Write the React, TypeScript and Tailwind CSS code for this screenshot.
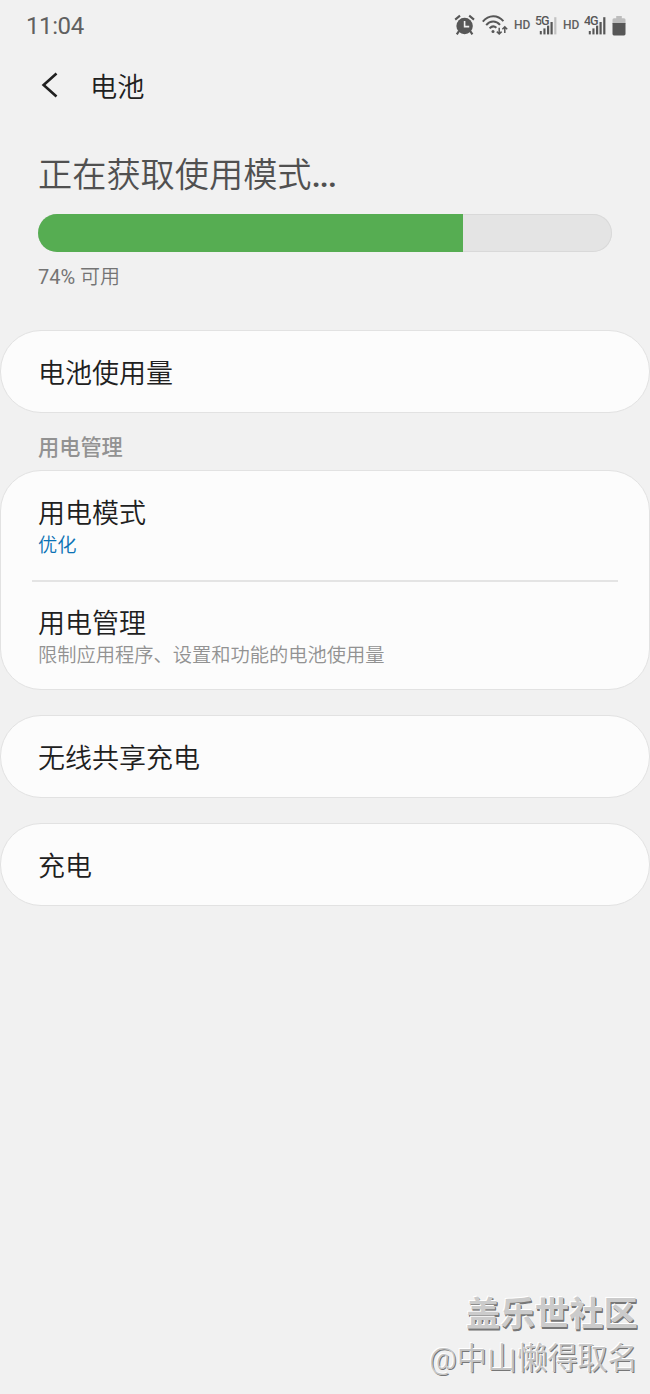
import type { ReactNode } from "react"

const BATTERY_LEVEL = 74

function AlarmIcon() {
  return (
    <svg width="22" height="22" viewBox="0 0 22 22" fill="none" stroke="#575757">
      <circle cx="10.6" cy="12" r="8.2" fill="#575757" stroke="none" />
      <path d="M1.2 5.6 6 1.6M15.2 1.6 20 5.6" strokeWidth="2.1" />
      <path d="m5 17-2.2 3.4M16.2 17l2.2 3.4" strokeWidth="2.2" />
      <path d="M10.6 7v5.6h4.6" stroke="#f1f1f1" strokeWidth="1.6" />
    </svg>
  )
}

function WifiIcon() {
  return (
    <svg width="27" height="22" viewBox="0 0 27 22" fill="none" stroke="#575757" strokeWidth="2">
      <path d="M.8 7.6C6.8.6 15.6.6 21.4 7.2" />
      <path d="M4.2 11.2c4-4.8 9.8-4.8 13.8-.4" />
      <path d="M7.6 14.4c2.2-2.4 4.6-2.6 6.8-.6" />
      <circle cx="11" cy="17.4" r="1.5" fill="#575757" stroke="none" />
      <path d="M17.2 13.8v6M14.8 17.6l2.4 2.4 2.4-2.4" strokeWidth="1.5" />
      <path d="M22.8 19v-6M20.4 15.2l2.4-2.4 2.4 2.4" strokeWidth="1.5" />
    </svg>
  )
}

function SignalIcon({ label, full }: { label: string; full?: boolean }) {
  return (
    <svg width="24" height="24" viewBox="0 0 24 24" fill="#575757">
      <rect x="4.8" y="18" width="2" height="3.4" />
      <rect x="8.4" y="15.4" width="2.1" height="6" />
      <rect x="12" y="12.6" width="2.2" height="8.8" />
      <rect x="15.5" y="9" width="2.2" height="12.4" />
      <rect x="19.2" y="4.2" width="2.2" height="17.2" fill={full ? "#575757" : "#c2c2c2"} />
      <text x="0" y="12.4" fontSize="12.5" fontWeight="500" textLength="14.4" stroke="#f1f1f1" strokeWidth="1" paintOrder="stroke">
        {label}
      </text>
    </svg>
  )
}

function BatteryIcon() {
  return (
    <svg width="14" height="20" viewBox="0 0 14 20">
      <path d="M4.2 0h5.6v2.3H12q1.5 0 1.5 1.5V8H.5V3.8Q.5 2.3 2 2.3h2.2z" fill="#bdbdbd" />
      <path d="M.5 7h13v11q0 1.4-1.4 1.4H1.9Q.5 19.4.5 18z" fill="#575757" />
    </svg>
  )
}

function StatusBar() {
  return (
    <div className="flex h-[52px] items-center pl-[26px] pr-6 text-[#606060]">
      <span className="text-[24px] font-normal tracking-[-0.4px]">11:04</span>
      <div className="ml-auto flex items-center pb-[2px]">
        <AlarmIcon />
        <div className="ml-[6px] flex">
          <WifiIcon />
        </div>
        <span className="ml-[5px] w-[19px] text-[12px] font-medium">HD</span>
        <div className="ml-[2px] flex">
          <SignalIcon label="5G" />
        </div>
        <span className="ml-[4px] w-[19px] text-[12px] font-medium">HD</span>
        <div className="ml-[2px] flex">
          <SignalIcon label="4G" full />
        </div>
        <div className="ml-[4px] flex pt-px">
          <BatteryIcon />
        </div>
      </div>
    </div>
  )
}

function Card({ children }: { children: ReactNode }) {
  return <div className="rounded-[41px] border border-[#e2e2e2] bg-[#fcfcfc]">{children}</div>
}

function Row({ title }: { title: string }) {
  return (
    <Card>
      <div className="flex h-[81px] items-center pl-[37px] pt-[6px] text-[27px] text-[#202020]">{title}</div>
    </Card>
  )
}

export default function App() {
  return (
    <div className="flex h-[1394px] w-[650px] flex-col bg-[#f1f1f1] font-[Roboto,'Noto_Sans_CJK_SC',sans-serif] font-[350]">
      <StatusBar />

      <header className="flex h-[68px] items-center pl-[41px]">
        <svg className="-mt-[2px]" width="18" height="28" viewBox="0 0 18 28" fill="none" stroke="#202020" strokeWidth="2.6">
          <path d="M15.5 2.5 2.6 14l12.9 11.5" />
        </svg>
        <h1 className="ml-[31px] pt-[3px] text-[27.2px] leading-9 text-[#202020]">电池</h1>
      </header>

      <section className="px-[38px] pt-[31px]">
        <h2 className="h-12 text-[34.2px] leading-12 text-[#505050]">
          正在获取使用模式<span className="font-medium tracking-[-1.4px]">...</span>
        </h2>
        <div className="relative mt-[15px] h-[38px] overflow-hidden rounded-full bg-[#e4e4e4] inset-ring inset-ring-[#d9d9d9]">
          <div className="h-full bg-[#56ad52]" style={{ width: `${BATTERY_LEVEL}%` }} />
        </div>
        <p className="mt-[11px] text-[20px] leading-7 text-[#747474]">
          <span className="font-normal">{BATTERY_LEVEL}%</span> 可用
        </p>
      </section>

      <main className="mt-[39px] flex flex-col">
        <Row title="电池使用量" />
        <h3 className="h-[57px] pl-[38px] text-[21.2px] font-medium leading-[70px] text-[#929292]">用电管理</h3>
        <Card>
          <div className="h-[109px] pl-[37px] pt-[25px]">
            <div className="text-[27px] leading-9 text-[#202020]">用电模式</div>
            <div className="text-[19.25px] leading-7 text-[#0b72b5]">优化</div>
          </div>
          <div className="mx-[31px] h-[2px] bg-[#e4e4e4]" />
          <div className="h-[107px] pl-[37px] pt-[24px]">
            <div className="text-[27px] leading-9 text-[#202020]">用电管理</div>
            <div className="text-[19.25px] leading-7 text-[#929292]">限制应用程序、设置和功能的电池使用量</div>
          </div>
        </Card>
        <div className="mt-[25px] flex flex-col gap-[25px]">
          <Row title="无线共享充电" />
          <Row title="充电" />
        </div>
      </main>

      <footer className="mt-auto flex flex-col items-end pb-[13px] pr-[12px]">
        <div className="text-[34.4px] font-bold leading-[46px] text-[#cbcbcb] [text-shadow:-1px_-1px_0_#fff,1px_1px_0_#777,1px_2px_0_#777]">
          盖乐世社区
        </div>
        <div className="text-[30.2px] leading-[44px] text-[#c4c4c4] [text-shadow:-1px_-1px_0_#fff,1px_1px_0_#777]">
          @中山懒得取名
        </div>
      </footer>
    </div>
  )
}
